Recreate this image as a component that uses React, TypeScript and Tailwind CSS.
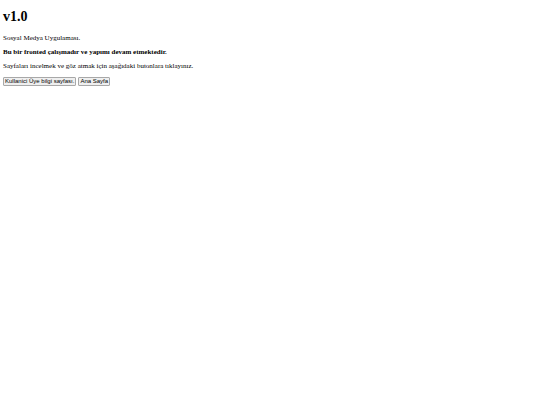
interface PageLink {
  label: string;
  href: string;
}

const pages: PageLink[] = [
  { label: "Kullanici Üye bilgi sayfası.", href: "#profil" },
  { label: "Ana Sayfa", href: "#anasayfa" },
];

const PageButton = ({ label, href }: PageLink) => {
  return (
    <button
      type="button"
      onClick={() => {
        window.location.hash = href;
      }}
      className="rounded-[1px] border border-[#a8a8a8] bg-[#efefef] px-px font-['Liberation_Sans',sans-serif] text-[6px] leading-[7px] text-black"
    >
      {label}
    </button>
  );
};

export default function App() {
  return (
    <main className="flex flex-col gap-[6px] bg-white px-[3px] py-[9px] font-['Liberation_Serif',serif] text-[7px] leading-[8px] text-black">
      <h1 className="mb-[4px] text-[14px] leading-[15px] font-bold">v1.0</h1>
      <p>Sosyal Medya Uygulaması.</p>
      <p className="font-bold">
        Bu bir fronted çalışmadır ve yapımı devam etmektedir.
      </p>
      <p>Sayfaları incelmek ve göz atmak için aşağıdaki butonlara tıklayınız.</p>
      <div className="flex flex-wrap gap-[2px] pt-px">
        {pages.map((page) => (
          <PageButton key={page.href} label={page.label} href={page.href} />
        ))}
      </div>
    </main>
  );
}
